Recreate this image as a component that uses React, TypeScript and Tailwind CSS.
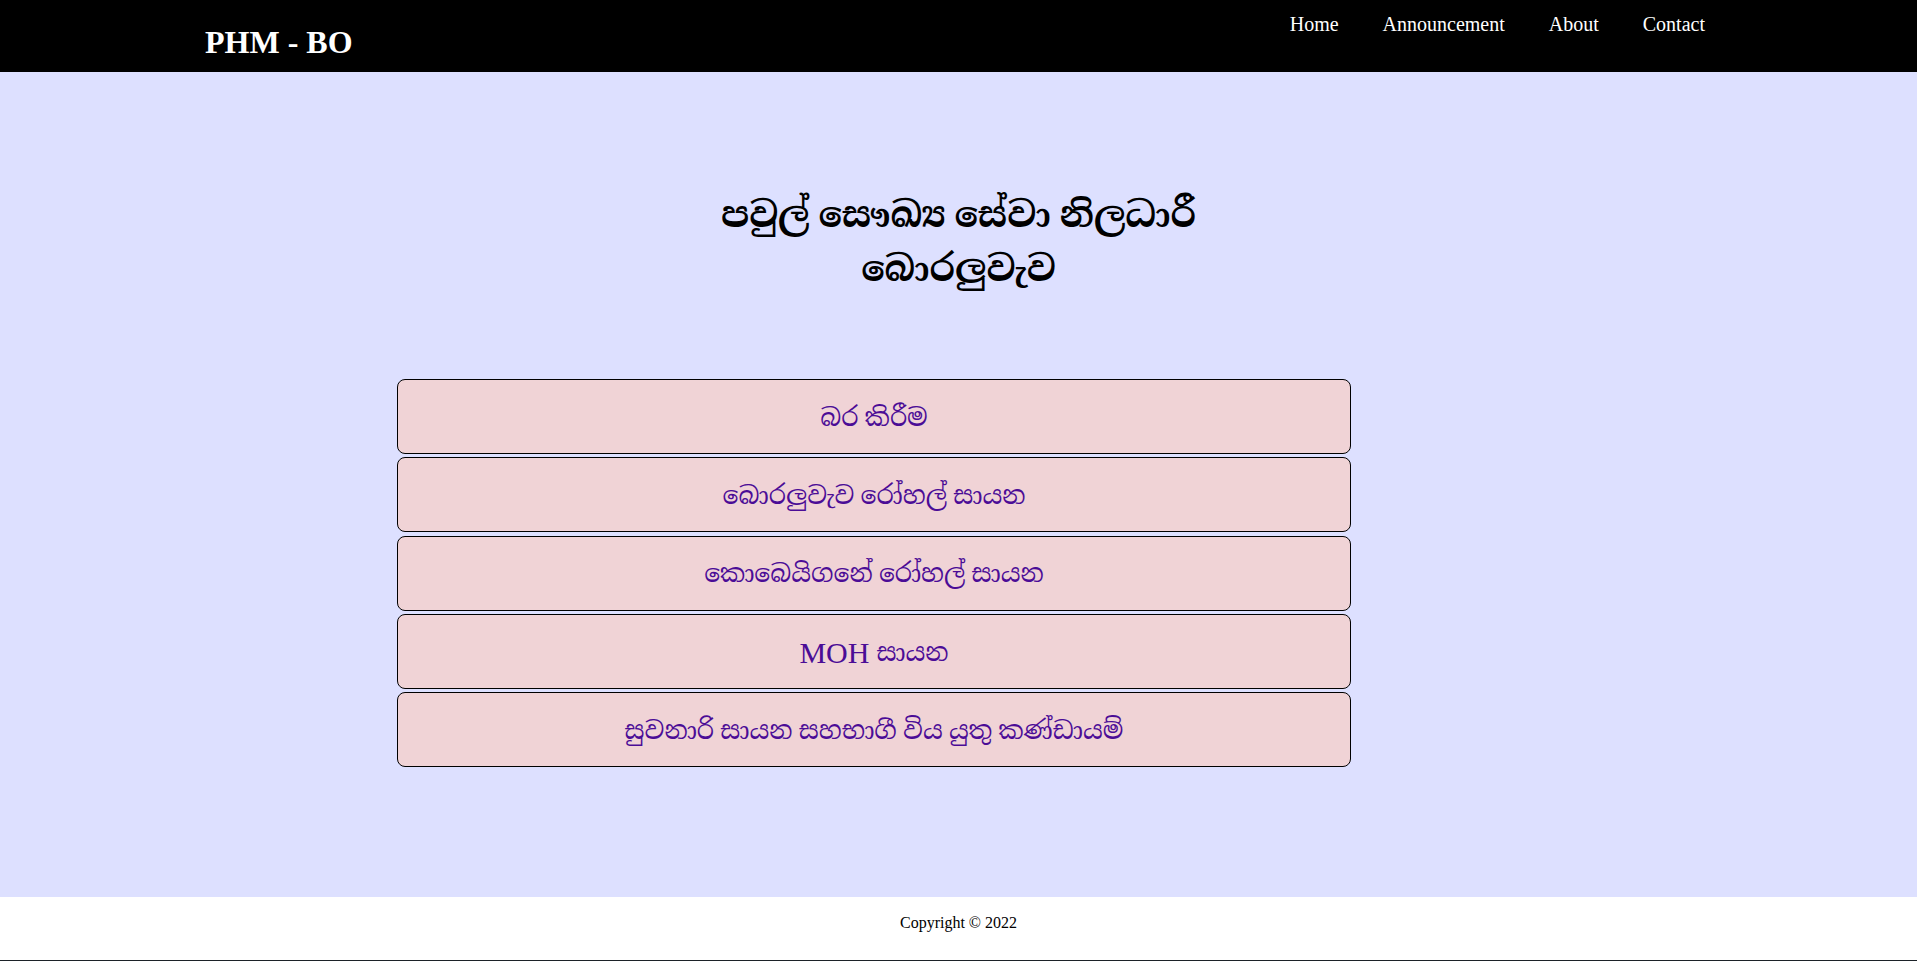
import React from 'react'

const navLinks = ['Home', 'Announcement', 'About', 'Contact']

// latin part keeps the full size, sinhala part is set a bit smaller
const clinicLinks = [
  { latin: '', si: 'බර කිරීම' },
  { latin: '', si: 'බොරලුවැව රෝහල් සායන' },
  { latin: '', si: 'කොබෙයිගනේ රෝහල් සායන' },
  { latin: 'MOH', si: 'සායන' },
  { latin: '', si: 'සුවනාරි සායන සහභාගී විය යුතු කණ්ඩායම්' }
]

const serif = "font-['Liberation_Serif','Noto_Serif_Sinhala','Noto_Sans_Sinhala',serif]"

export default function App() {
  return (
    <div className={`${serif} w-full min-h-[961px] flex flex-col`}>
      {/* Navbar */}
      <header className="h-[72px] bg-black flex justify-between items-start">
        <h1 className="pl-[205px] pt-[22px] text-[32px] leading-[40px] font-bold text-white">
          PHM - BO
        </h1>
        <nav className="flex pr-[190px] pt-[10px]">
          {navLinks.map((link) => (
            <a
              key={link}
              href="#"
              className="px-[22px] text-[20px] leading-[28px] text-white"
            >
              {link}
            </a>
          ))}
        </nav>
      </header>

      {/* Main */}
      <main className="h-[825px] bg-[#dde0ff] flex flex-col">
        <h2 className="pt-[116px] text-center text-[36px] leading-[54px] font-bold text-black">
          පවුල් සෞඛ්‍ය සේවා නිලධාරී
          <br />
          බොරලුවැව
        </h2>

        <div className="mt-[83px] ml-[397px] w-[954px] flex flex-col gap-[3.25px]">
          {clinicLinks.map((item) => (
            <button
              key={item.si}
              className="h-[75px] w-full rounded-[8px] border border-black bg-[#f0d3d6] text-[#4b0c96] text-center flex items-center justify-center gap-[7px] pt-[2px]"
            >
              {item.latin && <span className="text-[30px]">{item.latin}</span>}
              <span className="text-[25px]">{item.si}</span>
            </button>
          ))}
        </div>
      </main>

      {/* Footer */}
      <footer className="h-[63px] bg-white flex items-center justify-center">
        <p className="text-[16px] text-black pb-[12px]">Copyright © 2022</p>
      </footer>
      <div className="h-px bg-[#1c2228]" />
    </div>
  )
}
